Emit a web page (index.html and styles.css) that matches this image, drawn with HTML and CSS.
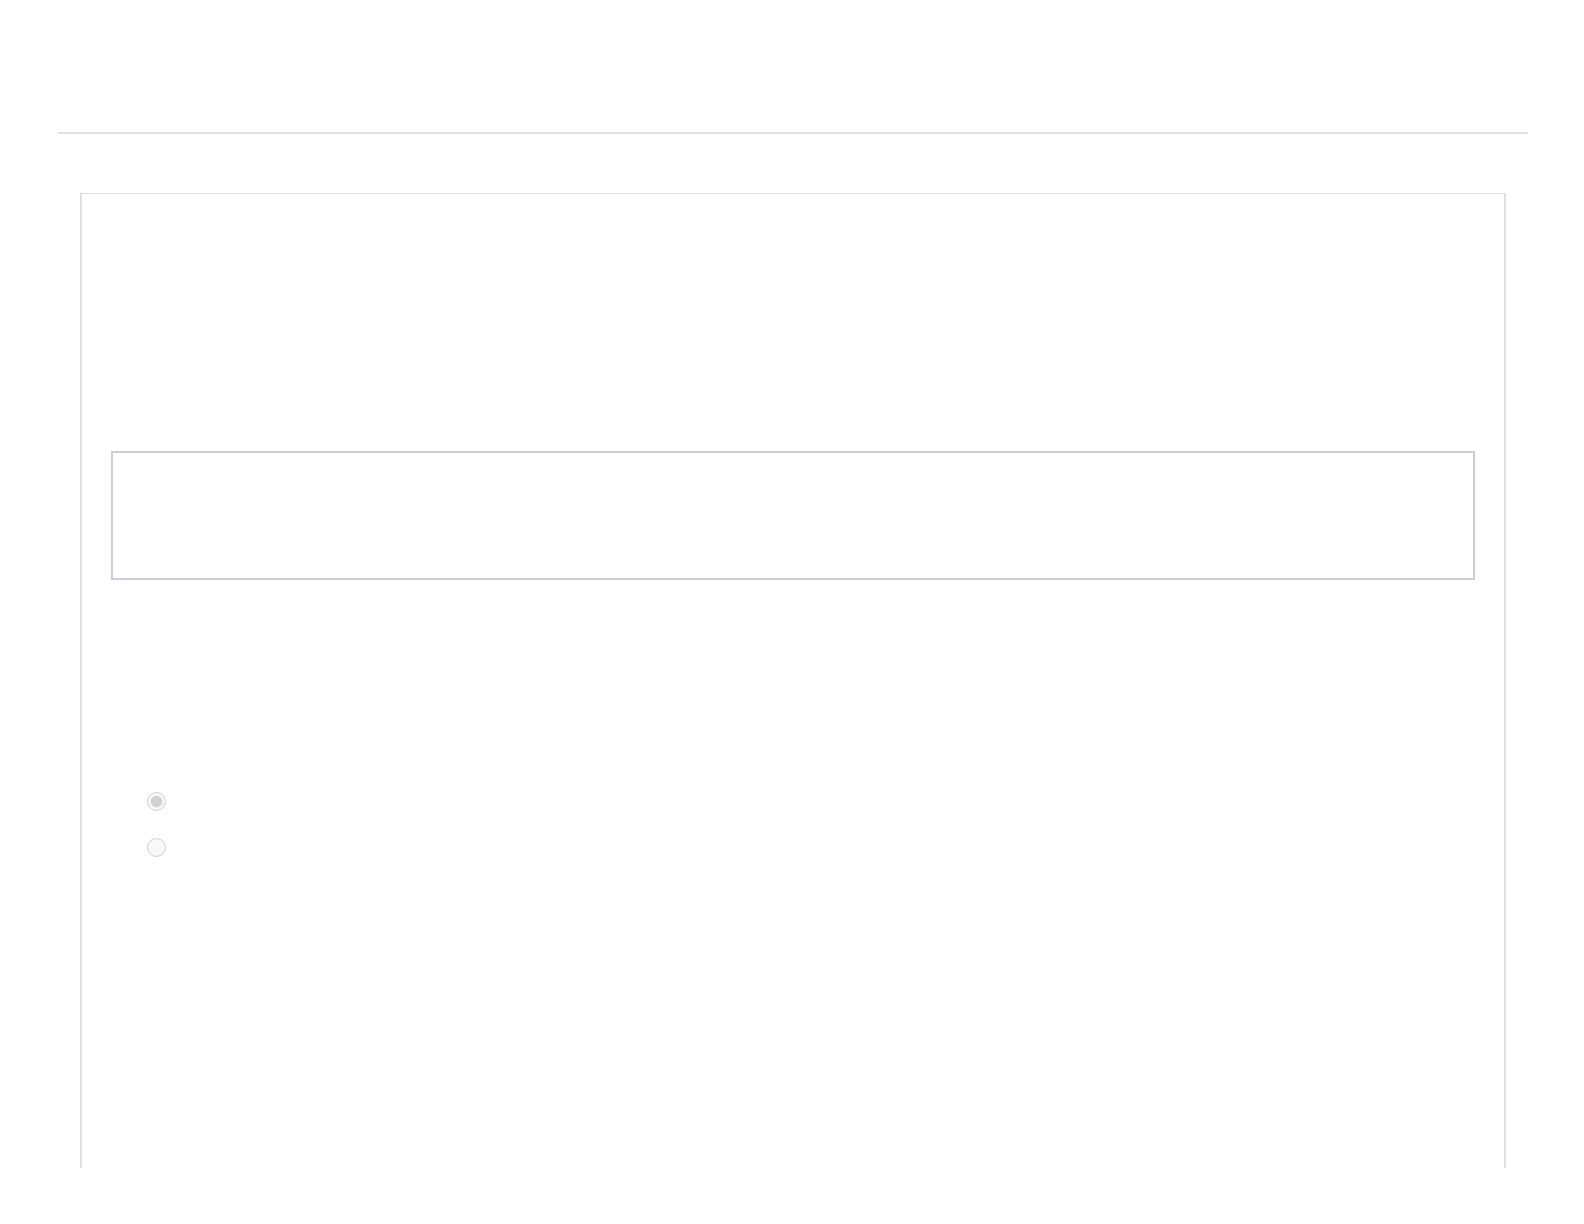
FILE: index.html
```html
<!DOCTYPE html>
<html lang="en">
<head>
    <meta charset="UTF-8">
    <meta name="viewport" content="width=device-width, initial-scale=1.0">
    <title>Settings</title>
    <link rel="stylesheet" href="styles.css">
</head>
<body>
    <div class="page">
        <header class="topbar"></header>

        <main class="main">
            <section class="card">
                <div class="field-box"></div>

                <div class="options">
                    <label class="option">
                        <input type="radio" name="mode" checked disabled />
                    </label>
                    <label class="option">
                        <input type="radio" name="mode" disabled />
                    </label>
                </div>
            </section>
        </main>
    </div>
</body>
</html>
```

FILE: styles.css
```css
/* Global Styles */
* {
    box-sizing: border-box;
    font-family: "Liberation Sans", Arial, sans-serif;
    margin: 0;
    padding: 0;
}

body {
    background-color: #ffffff;
    color: #333;
}

.page {
    padding: 0 56px 0 58px;
}

/* Header */
.topbar {
    height: 134px;
    border-bottom: 2px solid #e3e0e3;
}

/* Card */
.main {
    padding: 59px 22px 0;
}

.card {
    height: 975px;
    border: 2px solid #dedede;
    border-top-width: 1px;
    border-bottom: none;
    padding: 257px 29px 0;
}

.field-box {
    height: 129px;
    border: 2px solid #cbd0d8;
}

/* Radio Options */
.options {
    display: flex;
    flex-direction: column;
    gap: 27px;
    padding: 212px 0 0 36px;
}

.option {
    display: flex;
    align-items: center;
}

.option input[type="radio"] {
    width: 19px;
    height: 19px;
    margin: 0;
}
```
